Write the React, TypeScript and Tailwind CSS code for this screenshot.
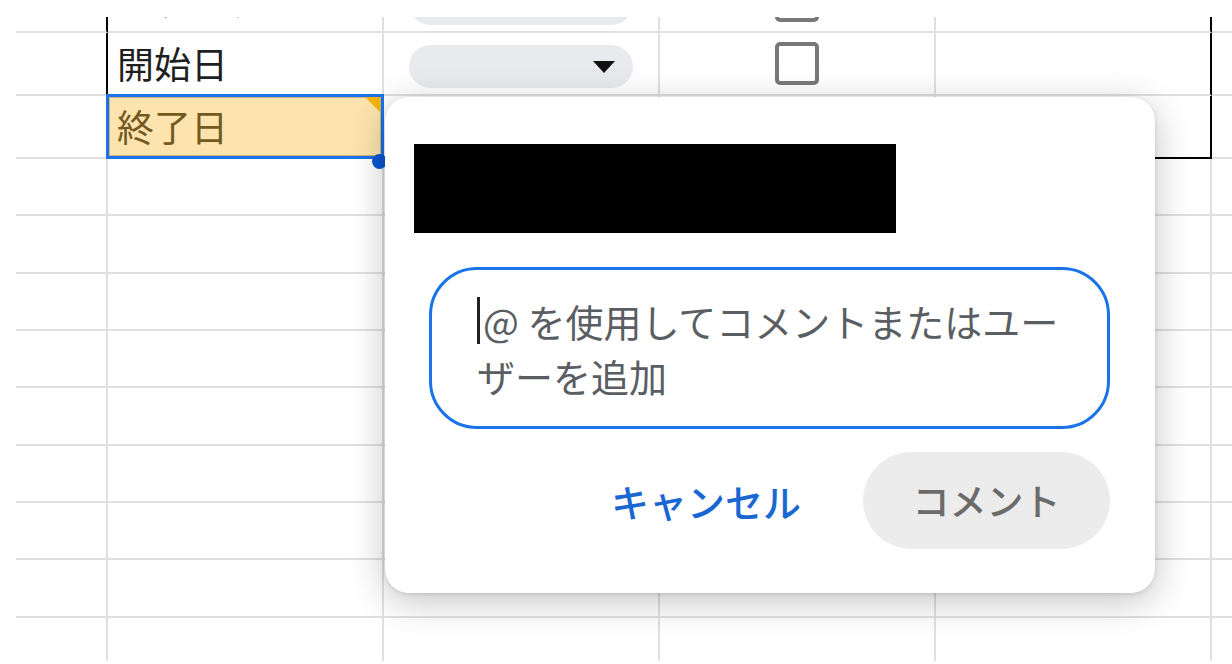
import React from "react";

const LINE = "border-[#e0e0e0]";

function Dropdown() {
  return (
    <div className="ml-[25px] mt-[12px] flex h-[43px] w-[224px] items-center justify-end rounded-full bg-[#e8eaed] pr-[18px]">
      <svg width="22" height="12" viewBox="0 0 22 12">
        <path d="M0 0 H22 L11 12 Z" fill="#111" />
      </svg>
    </div>
  );
}

function Checkbox() {
  return <div className="h-[43px] w-[44px] rounded-[5px] border-[4px] border-[#787878]" />;
}

function FormRow({ label, h, extra }: { label: string; h: string; extra?: string }) {
  return (
    <div className={`flex ${h} ${extra ?? ""}`}>
      <div className={`w-[92px] shrink-0 border-b-2 border-r-2 ${LINE} border-r-black`} />
      <div className={`flex w-[276px] shrink-0 items-center border-b-2 border-r-2 ${LINE} pl-[9px] text-[37px] text-[#1f1f1f]`}>
        {label}
      </div>
      <div className={`flex w-[276px] shrink-0 items-start border-b-2 border-r-2 ${LINE}`}>
        <Dropdown />
      </div>
      <div className={`flex w-[276px] shrink-0 items-center justify-center border-b-2 border-r-2 ${LINE}`}>
        <Checkbox />
      </div>
      <div className={`w-[276px] shrink-0 border-b-2 border-r-2 ${LINE} border-r-black`} />
      <div className={`flex-1 border-b-2 ${LINE}`} />
    </div>
  );
}

function EmptyRow({ h }: { h: string }) {
  return (
    <div className={`flex ${h}`}>
      <div className={`w-[92px] shrink-0 border-b-2 border-r-2 ${LINE}`} />
      <div className={`w-[276px] shrink-0 border-b-2 border-r-2 ${LINE}`} />
      <div className={`w-[276px] shrink-0 border-b-2 border-r-2 ${LINE}`} />
      <div className={`w-[276px] shrink-0 border-b-2 border-r-2 ${LINE}`} />
      <div className={`w-[276px] shrink-0 border-b-2 border-r-2 ${LINE}`} />
      <div className={`flex-1 border-b-2 ${LINE}`} />
    </div>
  );
}

export default function App() {
  return (
    <div className="relative h-[664px] w-[1232px] overflow-hidden bg-white font-['Noto_Sans_CJK_JP','Noto_Sans',sans-serif]">
      <div className="ml-[16px] mt-[17px] h-[644px] overflow-hidden">
        <FormRow label="ステータス" h="h-[63px]" extra="-mt-[47px]" />
        <FormRow label="開始日" h="h-[63px]" />
        {/* selected row */}
        <div className="flex h-[63px]">
          <div className={`w-[92px] shrink-0 border-b-2 border-r-2 ${LINE}`} />
          <div className="relative flex w-[276px] shrink-0 items-center border-b-2 border-r-2 border-b-black border-r-[#e0e0e0] bg-[#fde4ae] pl-[9px] text-[37px] text-[#725a1f]">
            終了日
            <div className="absolute -bottom-[2px] -left-[2px] -right-[2px] -top-[2px] border-[3px] border-[#1a73e8] shadow-[inset_0_0_0_1px_rgba(110,90,50,0.35)]">
              <div className="absolute right-[1px] top-0 h-[15px] w-[15px] bg-[#f4b400] [clip-path:polygon(0_0,100%_0,100%_100%)]" />
            </div>
            <div className="absolute left-[264px] top-[58px] h-[15px] w-[15px] rounded-full bg-[#0b57d0]" />
          </div>
          <div className={`w-[276px] shrink-0 border-b-2 border-r-2 border-b-black ${LINE}`} />
          <div className={`w-[276px] shrink-0 border-b-2 border-r-2 border-b-black ${LINE}`} />
          <div className="w-[276px] shrink-0 border-b-2 border-r-2 border-black" />
          <div className={`flex-1 border-b-2 ${LINE}`} />
        </div>
        <EmptyRow h="h-[57px]" />
        <EmptyRow h="h-[58px]" />
        <EmptyRow h="h-[57px]" />
        <EmptyRow h="h-[57px]" />
        <EmptyRow h="h-[58px]" />
        <EmptyRow h="h-[57px]" />
        <EmptyRow h="h-[57px]" />
        <EmptyRow h="h-[58px]" />
        <EmptyRow h="h-[57px]" />
      </div>

      {/* comment popup */}
      <div className="absolute left-[385px] top-[97px] w-[770px] rounded-[24px] bg-white pb-[44px] pl-[44px] pr-[45px] pt-[47px] shadow-[0_8px_36px_rgba(0,0,0,0.24),0_1px_4px_rgba(0,0,0,0.12)]">
        <div className="-ml-[15px] h-[89px] w-[482px] bg-black" />
        <div className="mt-[34px] h-[162px] rounded-[48px] border-[3px] border-[#1a73e8] pl-[45px] pr-[10px] pt-[23px] text-[38px] leading-[55px] text-[#5a5e62]">
          <span className="mr-[3px] mt-[4px] inline-block h-[47px] w-[3px] bg-[#202124] align-top" />
          @ を使用してコメントまたはユー
          <br />
          ザーを追加
        </div>
        <div className="mt-[23px] flex items-center justify-end gap-[62px]">
          <span className="text-[38px] font-medium text-[#1967d2]">キャンセル</span>
          <div className="flex h-[97px] w-[247px] items-center justify-center rounded-full bg-[#ececec] text-[37px] font-medium text-[#6b6b6b]">
            コメント
          </div>
        </div>
      </div>
    </div>
  );
}
